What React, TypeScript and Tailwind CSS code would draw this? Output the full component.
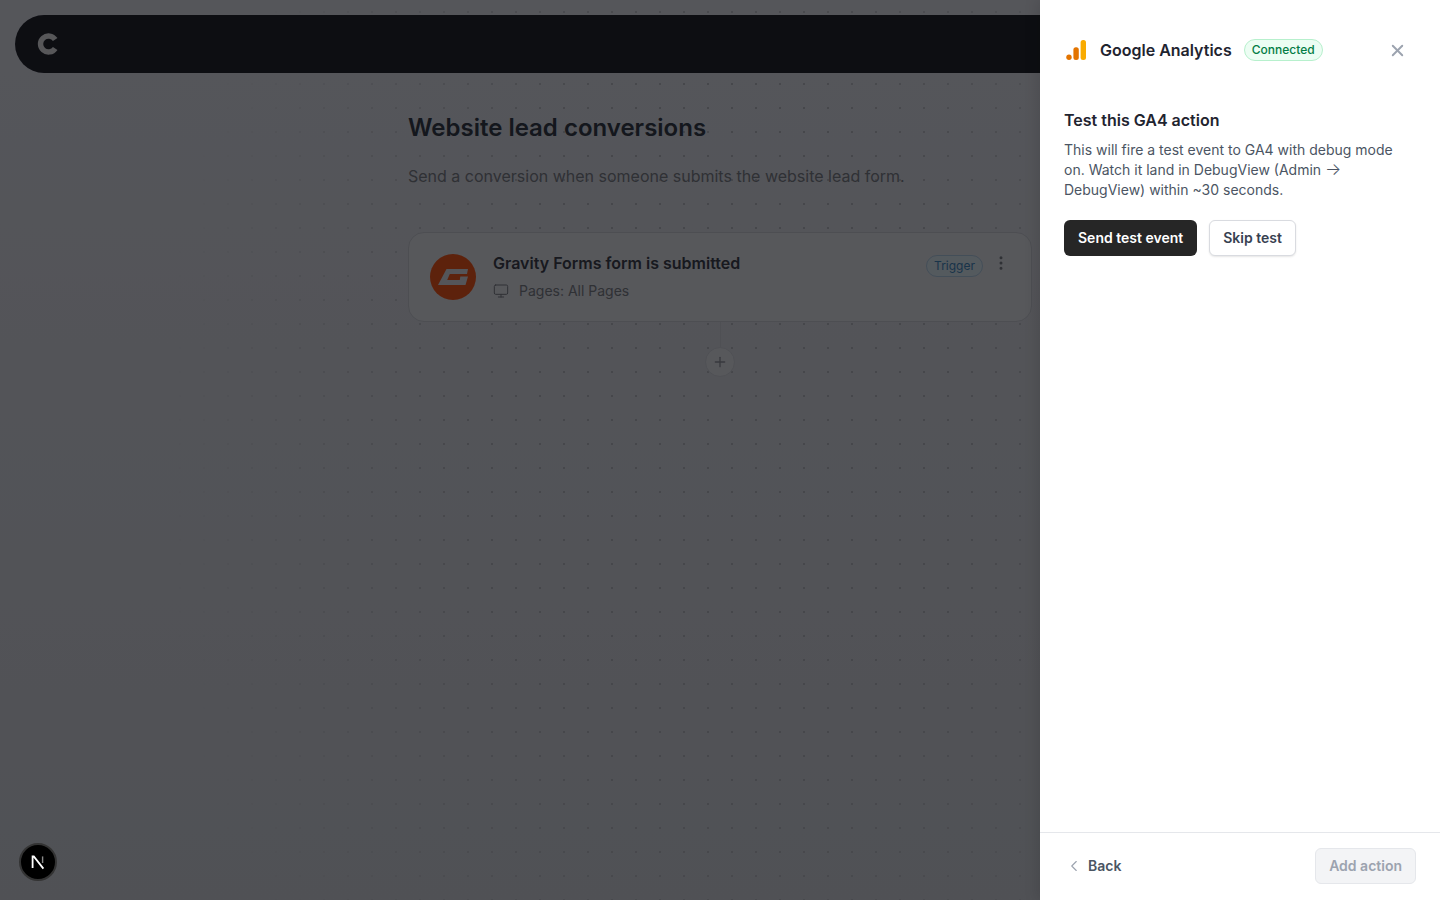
import { ChevronLeft, Monitor, MoreVertical, Plus, X } from "lucide-react";

function GoogleAnalyticsLogo() {
	return (
		<svg width="24" height="24" viewBox="0 0 24 24" aria-hidden="true">
			<rect x="16.6" y="2" width="5.4" height="20" rx="2.5" fill="#f9ab00" />
			<rect x="9.4" y="9.2" width="5.4" height="12.8" rx="2.5" fill="#e37400" />
			<circle cx="5" cy="19.3" r="2.7" fill="#e37400" />
		</svg>
	);
}

function GravityLogo() {
	return (
		<div className="flex h-[46px] w-[46px] items-center justify-center rounded-full bg-[#e8551f]">
			<svg width="30" height="16" viewBox="0 0 30 16" aria-hidden="true">
				<path
					d="M8.5 0H30L29 5H11.8L9.2 11H21.8L22.3 7.5H30L27.5 16H0Z"
					fill="#d2d4de"
				/>
			</svg>
		</div>
	);
}

function BrandMark() {
	return (
		<svg width="24" height="24" viewBox="0 0 24 24" aria-hidden="true">
			<path
				d="M19.2 7.6A8 8 0 1 0 19.2 16.4"
				fill="none"
				stroke="#d9dadf"
				strokeWidth="5.4"
			/>
		</svg>
	);
}

function CanvasPage() {
	return (
		<div className="relative h-full bg-linear-to-b from-[#d5d7e2] to-[#c8cbd5]">
			<div className="absolute inset-0 bg-[radial-gradient(circle,#b0b2bc_1px,transparent_1px)] bg-[size:24px_24px] [mask-image:radial-gradient(ellipse_560px_820px_at_720px_450px,black_45%,transparent_100%)]" />
			<div className="relative p-[15px] pb-0">
				<header className="flex h-[58px] items-center rounded-[29px] bg-[#21232f] pl-[21px]">
					<BrandMark />
				</header>
			</div>
			<main className="relative mx-auto w-[624px]">
				<h1 className="mt-[39px] text-2xl font-semibold text-[#333a4a]">
					Website lead conversions
				</h1>
				<p className="mt-5 text-base leading-6 text-[#777a85]">
					Send a conversion when someone submits the website lead form.
				</p>
				<section className="mt-11 flex h-[90px] items-start rounded-2xl border border-[#c0c3cd] bg-[#d9dbe4] pl-[21px] pr-[21px] pt-[21px]">
					<GravityLogo />
					<div className="ml-[17px] -mt-px flex-1">
						<h2 className="text-base font-semibold leading-5 text-[#3c404e]">
							Gravity Forms form is submitted
						</h2>
						<div className="mt-2 flex items-center gap-2.5 text-sm leading-5 text-[#777a85]">
							<Monitor size={16} strokeWidth={1.5} />
							<span>Pages: All Pages</span>
						</div>
					</div>
					<span className="mt-px rounded-full border border-[#a9c4dc] bg-[#d3e0ec] px-[7px] text-xs leading-[20px] text-[#3f82b8]">
						Trigger
					</span>
					<MoreVertical
						size={18}
						className="ml-[9px] text-[#777a85]"
						strokeWidth={2}
					/>
				</section>
				<div className="mx-auto h-[25px] w-px bg-[#c6c9d3]" />
				<div className="mx-auto flex h-[30px] w-[30px] items-center justify-center rounded-full border border-[#c6c9d3] bg-[#d9dbe4] text-[#8c8f99]">
					<Plus size={16} strokeWidth={2} />
				</div>
			</main>
		</div>
	);
}

function SidePanel() {
	return (
		<aside className="absolute inset-y-0 right-0 flex w-[400px] flex-col bg-white shadow-[-4px_0_12px_rgba(0,0,0,0.1)]">
			<div className="flex-1 px-6">
				<div className="flex h-[100px] items-center">
					<GoogleAnalyticsLogo />
					<span className="ml-3 text-base font-semibold text-[#1f2430]">
						Google Analytics
					</span>
					<span className="ml-3 rounded-full border border-[#b7f0cd] bg-[#ecfdf3] px-[7px] text-xs leading-[20px] font-medium text-[#047c45]">
						Connected
					</span>
					<X size={19} className="ml-auto mr-[9px] text-[#9ca3af]" strokeWidth={2.4} />
				</div>
				<h3 className="mt-[8px] text-base leading-6 font-semibold text-[#1f2430]">
					Test this GA4 action
				</h3>
				<p className="mt-[8px] text-sm leading-5 text-[#4b5563]">
					This will fire a test event to GA4 with debug mode
					<br />
					on. Watch it land in DebugView (Admin{" "}
					<span className="text-[17px] leading-none font-light">→</span>
					<br />
					DebugView) within ~30 seconds.
				</p>
				<div className="mt-5 flex gap-3">
					<button className="h-9 rounded-md bg-[#262626] px-3.5 text-sm font-semibold text-white">
						Send test event
					</button>
					<button className="h-9 rounded-md border border-[#d9dbe0] bg-white px-[13px] text-sm font-semibold text-[#374151] shadow-[0_1px_2px_rgba(0,0,0,0.1)]">
						Skip test
					</button>
				</div>
			</div>
			<div className="flex h-[68px] items-start justify-between border-t border-[#e5e7eb] pl-6 pr-6 pt-[15px]">
				<button className="flex h-9 items-center gap-[5px] pl-[1px] text-sm font-semibold text-[#4b5563]">
					<ChevronLeft size={18} strokeWidth={1.5} className="text-[#9ca3af]" />
					Back
				</button>
				<button className="h-9 rounded-md border border-[#e5e7eb] bg-[#f3f4f6] px-[13px] text-sm font-semibold text-[#9ca3af]">
					Add action
				</button>
			</div>
		</aside>
	);
}

export default function App() {
	return (
		<div className="relative h-screen w-full overflow-hidden font-['Inter',sans-serif]">
			<CanvasPage />
			<div className="absolute inset-0 bg-black/60" />
			<div className="absolute bottom-[19px] left-[19px] flex h-[38px] w-[38px] items-center justify-center rounded-full border-2 border-[#333333] bg-black">
				<svg width="16" height="16" viewBox="0 0 16 16" aria-hidden="true">
					<path d="M2.6 14V2.4H3.8L13.4 14.6" fill="none" stroke="#ffffff" strokeWidth="1.8" />
					<path d="M12.6 2.4V9" stroke="#8a8a8a" strokeWidth="1.4" />
				</svg>
			</div>
			<SidePanel />
		</div>
	);
}
